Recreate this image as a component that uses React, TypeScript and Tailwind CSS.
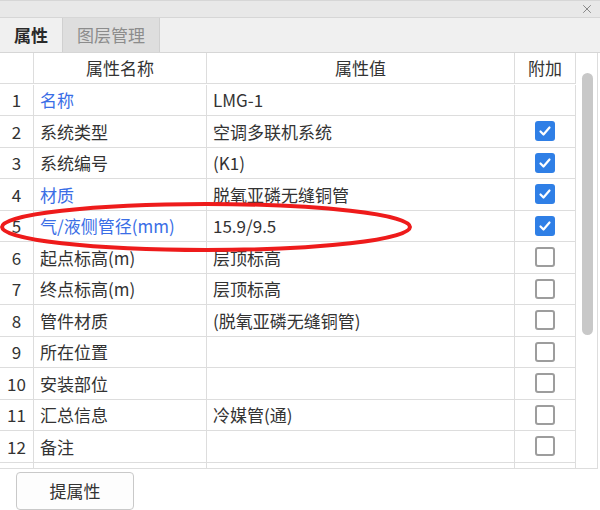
import { X } from "lucide-react";

type Row = {
  name: string;
  value: string;
  blue?: boolean;
  check?: boolean | null;
  num?: boolean;
};

const rows: Row[] = [
  { name: "名称", value: "LMG-1", blue: true, check: null },
  { name: "系统类型", value: "空调多联机系统", check: true },
  { name: "系统编号", value: "(K1)", check: true },
  { name: "材质", value: "脱氧亚磷无缝铜管", blue: true, check: true },
  { name: "气/液侧管径(mm)", value: "15.9/9.5", blue: true, check: true },
  { name: "起点标高(m)", value: "层顶标高", check: false },
  { name: "终点标高(m)", value: "层顶标高", check: false },
  { name: "管件材质", value: "(脱氧亚磷无缝铜管)", check: false },
  { name: "所在位置", value: "", check: false },
  { name: "安装部位", value: "", check: false },
  { name: "汇总信息", value: "冷媒管(通)", check: false },
  { name: "备注", value: "", check: false },
  { name: "", value: "", check: null, num: false },
];

function Checkbox({ checked }: { checked: boolean }) {
  if (checked) {
    return (
      <div className="w-[20px] h-[20px] rounded-[3px] bg-[#2f7fe6] flex items-center justify-center">
        <svg width="14" height="14" viewBox="0 0 14 14">
          <polyline
            points="2.5,7.5 5.5,10.5 11.5,3.5"
            fill="none"
            stroke="white"
            strokeWidth="2.2"
            strokeLinecap="round"
            strokeLinejoin="round"
          />
        </svg>
      </div>
    );
  }
  return <div className="w-[20px] h-[20px] rounded-[3px] border-2 border-[#9d9d9d] bg-white" />;
}

const cell = "border-r border-b border-[#dddddd] flex items-center";

export default function App() {
  return (
    <div
      className="relative w-[600px] h-[510px] bg-white overflow-hidden text-[17px] text-[#333333]"
      style={{ fontFamily: '"Noto Sans CJK SC", "Noto Sans", sans-serif' }}
    >
      {/* title bar */}
      <div className="h-[18px] bg-[#e8e8e8] border-t border-b border-[#d6d6d6] flex items-center justify-end pr-[6px]">
        <X size={14} strokeWidth={1.6} className="text-[#808080]" />
      </div>

      {/* tabs */}
      <div className="h-[35px] bg-[#f0f0f0] border-b border-[#d6d6d6] flex items-stretch">
        <div className="w-[62px] flex items-center justify-center font-bold text-[#2a2a2a] text-[17px]">
          属性
        </div>
        <div className="w-[98px] flex items-center justify-center bg-[#dedede] border-x border-[#d0d0d0] text-[#8c8c8c] text-[17px]">
          图层管理
        </div>
      </div>

      {/* table */}
      <div className="flex h-[416px] border-b border-r border-[#dddddd] w-[598px] overflow-hidden">
        <div className="grid grid-cols-[34px_173px_308px_61px] auto-rows-[31.5px] content-start">
          <div className={`${cell} h-[31px]`} />
          <div className={`${cell} h-[31px] justify-center`}>属性名称</div>
          <div className={`${cell} h-[31px] justify-center`}>属性值</div>
          <div className={`${cell} h-[31px] justify-center`}>附加</div>
          {rows.map((r, i) => (
            <div key={i} className="contents">
              <div className={`${cell} justify-center`}>{r.num === false ? "" : i + 1}</div>
              <div className={`${cell} pl-[6px] whitespace-nowrap ${r.blue ? "text-[#3a6ee6]" : ""}`}>
                {r.name}
              </div>
              <div className={`${cell} pl-[6px] whitespace-nowrap`}>{r.value}</div>
              <div className={`${cell} justify-center`}>
                {r.check !== null && r.check !== undefined && <Checkbox checked={r.check} />}
              </div>
            </div>
          ))}
        </div>
        <div className="flex-1 pt-[20px] flex justify-center pl-[1px]">
          <div className="w-[11px] h-[262px] rounded-full bg-[#c8c8c8]" />
        </div>
      </div>

      {/* button */}
      <div className="pl-[16px] pt-[3px]">
        <button className="w-[118px] h-[38px] rounded-[4px] border border-[#c9c9c9] bg-[#fdfdfd] text-[17px] text-[#333333]">
          提属性
        </button>
      </div>

      {/* red annotation */}
      <svg className="absolute left-0 top-0 pointer-events-none" width="600" height="510">
        <ellipse cx="206" cy="227" rx="204" ry="23" fill="none" stroke="#ee1b1b" strokeWidth="4" />
      </svg>
    </div>
  );
}
